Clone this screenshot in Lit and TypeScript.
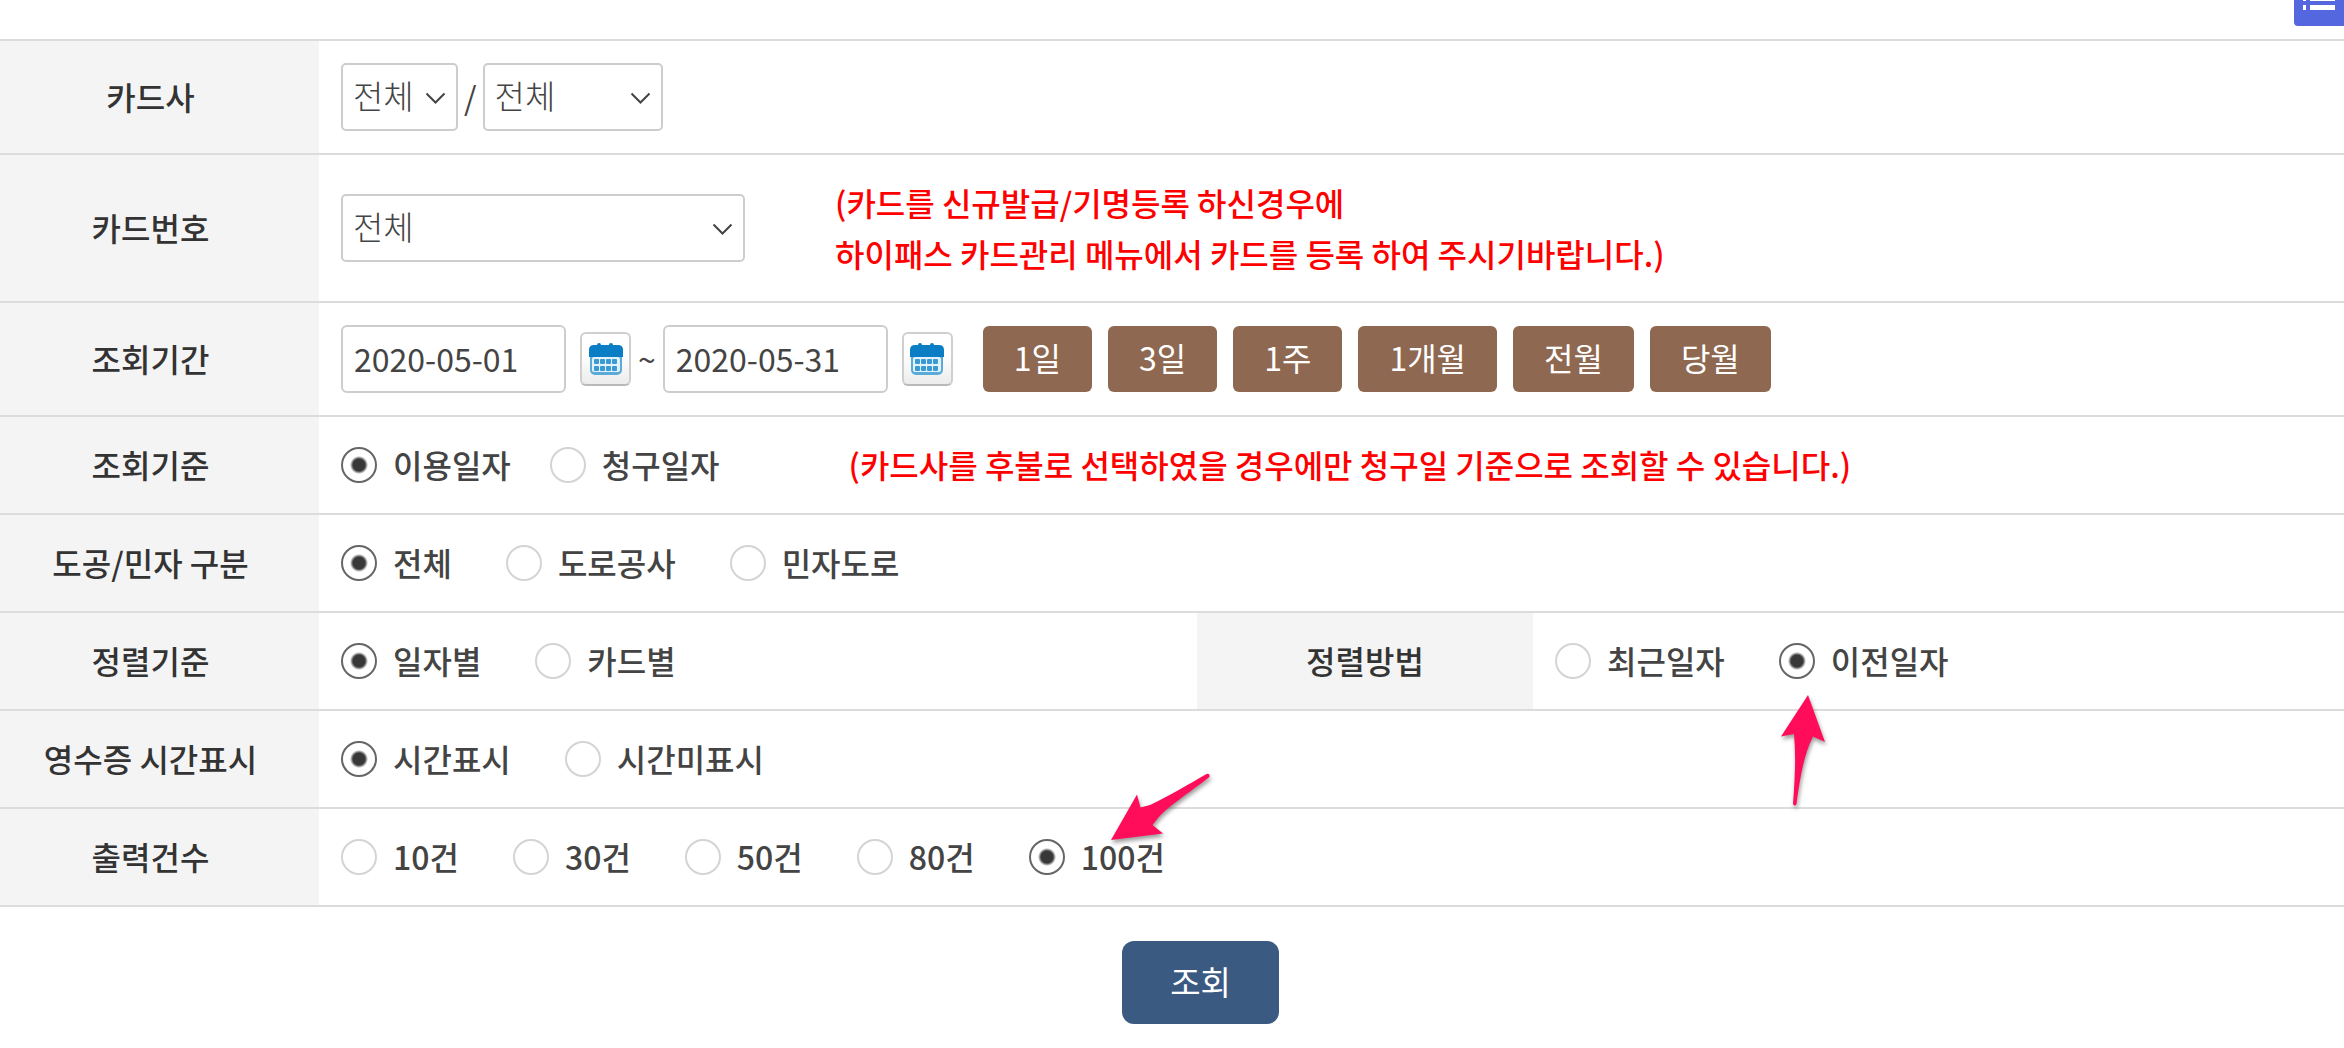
import { LitElement, html, css, svg, nothing, type TemplateResult } from "lit";
import { customElement, property } from "lit/decorators.js";
import { classMap } from "lit/directives/class-map.js";

interface Choice {
  label: string;
  checked?: boolean;
  arrow?: "up" | "down-left";
}

const upArrow = svg`
  <svg class="arrow arrow-up" viewBox="0 0 60 124" aria-hidden="true">
    <path d="M33 5 L50 52 L38 46.500 C29 64 25 88 21.500 114 Q20 117 18 114 C20 88 21 66 19 44 L6 46.500 Z" />
  </svg>`;

const downLeftArrow = svg`
  <svg class="arrow arrow-down-left" viewBox="0 0 116 82" aria-hidden="true">
    <path d="M6 73 L32 27.500 L35.500 40.500 L45 38 C66 28 84 17 101.500 7 Q105 6 104.500 10 C84 26 62 40 53 51 L47.500 58 L58 66.500 Z" />
  </svg>`;

@customElement("drop-down")
class DropDown extends LitElement {
  @property() name = "";
  @property() label = "";
  @property() size: "small" | "medium" | "large" = "small";

  static styles = css`
    :host {
      display: block;
    }
    .box {
      position: relative;
    }
    .small {
      width: 117px;
    }
    .medium {
      width: 180px;
    }
    .large {
      width: 404px;
    }
    select {
      display: block;
      width: 100%;
      height: 68px;
      padding: 0 36px 5px 10px;
      border: 2px solid #cdcdcd;
      border-radius: 5px;
      background: #fff;
      color: #444;
      appearance: none;
      font: 300 33px "Noto Sans CJK KR", sans-serif;
    }
    svg {
      position: absolute;
      top: 29px;
      right: 12px;
      width: 21px;
      height: 13px;
      fill: none;
      stroke: #444;
      stroke-width: 2;
      pointer-events: none;
    }
  `;

  render() {
    return html`
      <div class=${classMap({ box: true, [this.size]: true })}>
        <select name=${this.name} aria-label=${this.label}>
          <option>전체</option>
        </select>
        <svg viewBox="0 0 21 13" aria-hidden="true"><path d="M1.500 1.500 L10.500 10.500 L19.500 1.500" /></svg>
      </div>
    `;
  }
}

@customElement("date-field")
class DateField extends LitElement {
  @property() value = "";
  @property() label = "";

  static styles = css`
    :host {
      display: flex;
      align-items: center;
      gap: 14px;
    }
    input {
      box-sizing: border-box;
      width: 225px;
      height: 68px;
      padding: 0 11px 2px;
      border: 2px solid #cdcdcd;
      border-radius: 6px;
      background: #fff;
      color: #444;
      font: 400 32px "Noto Sans CJK KR", sans-serif;
    }
    button {
      display: grid;
      place-items: center;
      box-sizing: border-box;
      width: 51px;
      height: 54px;
      padding: 0;
      border: 2px solid #cfcfcf;
      border-bottom-color: #b9b9b9;
      border-radius: 6px;
      background: linear-gradient(#fff 40%, #ececec);
    }
    svg {
      width: 36px;
      height: 34px;
    }
  `;

  render() {
    return html`
      <input type="text" aria-label=${this.label} .value=${this.value} />
      <button type="button" aria-label="${this.label} 달력">
        <svg viewBox="0 0 36 34" aria-hidden="true">
          <rect x="2" y="4" width="32" height="29" rx="5" fill="#5aabd8" />
          <path d="M1 15 V8 Q1 3 6 3 H9 Q9 1 11 1 Q13 1 13 3 H21 Q21 1 23 1 Q25 1 25 3 H30 Q35 3 35 8 V15 Z" fill="#0a7dc4" />
          <rect x="4" y="15" width="28" height="15" rx="2" fill="#e2f1fa" />
          <g fill="#3a9ad2">
            ${[0, 1, 2, 3].map(
              (i) => svg`
                <rect x=${6 + i * 6} y="17" width="5" height="5" rx="1" />
                <rect x=${6 + i * 6} y="24" width="5" height="5" rx="1" />`,
            )}
          </g>
        </svg>
      </button>
    `;
  }
}

@customElement("app-root")
class AppRoot extends LitElement {
  static styles = css`
    :host {
      display: block;
      position: relative;
      overflow: hidden;
      background: #fff;
      color: #444;
      font: 500 32px/36px "Noto Sans CJK KR", "Noto Sans", sans-serif;
    }
    .menu {
      position: absolute;
      top: 0;
      right: 0;
      width: 50px;
      height: 26px;
      padding: 0;
      border: 0;
      border-radius: 0 0 0 4px;
      background: #5567df;
    }
    .menu svg {
      display: block;
      width: 50px;
      height: 26px;
    }
    form {
      padding: 39px 0 24px;
    }
    .rows {
      border-top: 2px solid #dcdcdc;
    }
    .row {
      display: grid;
      grid-template-columns: 319px 1fr;
      border-bottom: 2px solid #dcdcdc;
    }
    .row.split {
      grid-template-columns: 319px 878fr 336px 811fr;
    }
    .title {
      display: grid;
      place-items: center;
      padding: 0 18px 2px 0;
      background: #f4f4f4;
      color: #333;
      white-space: nowrap;
    }
    .split .title ~ .title {
      padding-right: 0;
    }
    .content {
      display: flex;
      align-items: center;
      padding: 22px 22px;
      white-space: nowrap;
    }
    .content.choices {
      gap: 54px;
      padding-block: 30px;
    }
    .content.choices.close {
      gap: 39px;
    }
    .slash {
      padding: 0 6px 3px;
      font-weight: 400;
    }
    .tilde {
      padding: 0 7px 3px;
      font-weight: 400;
    }
    .notice {
      margin: 0;
      color: #f00;
      line-height: 51px;
    }
    .card-notice {
      padding-left: 90px;
    }
    .basis-notice {
      padding: 0 0 2px 90px;
      line-height: 34px;
    }
    .periods {
      display: flex;
      gap: 16px;
      padding-left: 30px;
    }
    .periods button {
      height: 66px;
      padding: 0 31px 5px;
      border: 0;
      border-radius: 6px;
      background: #8e6850;
      color: #fff;
      font: 400 32px "Noto Sans CJK KR", sans-serif;
    }
    .choice {
      display: flex;
      align-items: center;
      gap: 16px;
      position: relative;
    }
    .choice span {
      padding-bottom: 2px;
      line-height: 34px;
    }
    .choice input {
      box-sizing: border-box;
      width: 36px;
      height: 36px;
      margin: 0;
      border: 2px solid #d4d4d4;
      border-radius: 50%;
      background: #fff;
      appearance: none;
    }
    .choice input:checked {
      border-color: #666;
      background: radial-gradient(circle, #383838 6px, #fff 9px);
    }
    .arrow {
      position: absolute;
      z-index: 1;
      fill: #ff0d5b;
      filter: drop-shadow(1px 3px 2px rgba(0, 0, 0, 0.4));
      pointer-events: none;
    }
    .arrow-up {
      top: 47px;
      left: -4px;
      width: 60px;
      height: 124px;
    }
    .arrow-down-left {
      top: -72px;
      left: 76px;
      width: 116px;
      height: 82px;
    }
    .actions {
      display: flex;
      justify-content: center;
      padding: 34px 0 0 57px;
    }
    .submit {
      height: 83px;
      padding: 0 48px 3px;
      border: 0;
      border-radius: 12px;
      background: #3b5a82;
      color: #fff;
      font: 400 33px "Noto Sans CJK KR", sans-serif;
    }
  `;

  private choices(name: string, label: string, items: Choice[], notice = ""): TemplateResult {
    return html`
      <div class="title" id="${name}-title">${label}</div>
      <div
        class=${classMap({ content: true, choices: true, close: notice !== "" })}
        role="radiogroup"
        aria-labelledby="${name}-title"
      >
        ${items.map(
          (item) => html`
            <label class="choice">
              <input type="radio" name=${name} .checked=${item.checked ?? false} />
              <span>${item.label}</span>
              ${item.arrow === "up" ? upArrow : item.arrow === "down-left" ? downLeftArrow : nothing}
            </label>
          `,
        )}
        ${notice ? html`<p class="notice basis-notice">${notice}</p>` : nothing}
      </div>
    `;
  }

  render() {
    return html`
      <form>
        <div class="rows">
          <div class="row">
            <div class="title">카드사</div>
            <div class="content">
              <drop-down name="company" label="카드사" size="small"></drop-down>
              <span class="slash">/</span>
              <drop-down name="company-type" label="카드사 구분" size="medium"></drop-down>
            </div>
          </div>
          <div class="row">
            <div class="title">카드번호</div>
            <div class="content">
              <drop-down name="card" label="카드번호" size="large"></drop-down>
              <p class="notice card-notice">
                (카드를 신규발급/기명등록 하신경우에<br />하이패스 카드관리 메뉴에서 카드를 등록 하여 주시기바랍니다.)
              </p>
            </div>
          </div>
          <div class="row">
            <div class="title">조회기간</div>
            <div class="content">
              <date-field label="시작일" value="2020-05-01"></date-field>
              <span class="tilde">~</span>
              <date-field label="종료일" value="2020-05-31"></date-field>
              <div class="periods">
                ${["1일", "3일", "1주", "1개월", "전월", "당월"].map(
                  (period) => html`<button type="button">${period}</button>`,
                )}
              </div>
            </div>
          </div>
          <div class="row">
            ${this.choices(
              "basis",
              "조회기준",
              [{ label: "이용일자", checked: true }, { label: "청구일자" }],
              "(카드사를 후불로 선택하였을 경우에만 청구일 기준으로 조회할 수 있습니다.)",
            )}
          </div>
          <div class="row">
            ${this.choices("road", "도공/민자 구분", [
              { label: "전체", checked: true },
              { label: "도로공사" },
              { label: "민자도로" },
            ])}
          </div>
          <div class="row split">
            ${this.choices("sort", "정렬기준", [{ label: "일자별", checked: true }, { label: "카드별" }])}
            ${this.choices("order", "정렬방법", [
              { label: "최근일자" },
              { label: "이전일자", checked: true, arrow: "up" },
            ])}
          </div>
          <div class="row">
            ${this.choices("time", "영수증 시간표시", [
              { label: "시간표시", checked: true },
              { label: "시간미표시" },
            ])}
          </div>
          <div class="row">
            ${this.choices("count", "출력건수", [
              { label: "10건" },
              { label: "30건" },
              { label: "50건" },
              { label: "80건" },
              { label: "100건", checked: true, arrow: "down-left" },
            ])}
          </div>
        </div>
        <div class="actions">
          <button class="submit" type="button">조회</button>
        </div>
      </form>
      <button class="menu" type="button" aria-label="메뉴">
        <svg viewBox="0 0 50 26" aria-hidden="true">
          <g fill="#fff">
            <rect x="9" y="5" width="3" height="5" />
            <rect x="16" y="5" width="25" height="5" />
            <rect x="9" y="0" width="3" height="1" />
            <rect x="16" y="0" width="25" height="1" />
          </g>
        </svg>
      </button>
    `;
  }
}
